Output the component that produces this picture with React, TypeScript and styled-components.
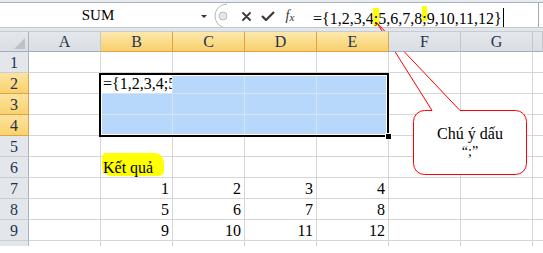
import React from 'react';
import styled, { createGlobalStyle, css } from 'styled-components';

const GlobalStyle = createGlobalStyle`
  html, body {
    margin: 0;
    padding: 0;
    background: #fff;
  }
  body {
    font-family: "Liberation Serif", "Times New Roman", serif;
  }
`;

const Page = styled.div`
  position: relative;
  width: 543px;
  height: 253px;
  overflow: hidden;
  background: #fff;
  font-family: "Liberation Serif", "Times New Roman", serif;
  color: #000;
`;

/* ---------- formula bar ---------- */

const TopStrip = styled.div`
  height: 2px;
  background: #e8ebef;
  border-bottom: 1px solid #a9b0b9;
`;

const FormulaBar = styled.div`
  display: flex;
  height: 24px;
  background: #fff;
  border-bottom: 1px solid #c3c8cf;
`;

const NameBox = styled.div`
  display: flex;
  width: 212px;
  align-items: center;
  font-size: 15px;
  line-height: 24px;
`;

const NameText = styled.span`
  flex: 1;
  text-align: center;
`;

const DropArrow = styled.span`
  width: 16px;
  display: flex;
  justify-content: center;
  padding-top: 2px;

  &::before {
    content: '';
    border-left: 3px solid transparent;
    border-right: 3px solid transparent;
    border-top: 3px solid #333;
  }
`;

const Grip = styled.svg`
  width: 23px;
  height: 24px;
  flex: none;
`;

const IconButton = styled.div`
  width: 22px;
  display: flex;
  align-items: center;
  justify-content: center;
  padding-top: 2px;
  color: #3a3a3a;
`;

const Fx = styled.span`
  font-style: italic;
  font-size: 14px;
  color: #333;
  line-height: 1;

  sub {
    font-size: 11px;
    vertical-align: -1px;
  }
`;

const FormulaText = styled.div`
  flex: 1;
  display: flex;
  align-items: flex-end;
  padding-left: 12px;
  font-size: 16px;
  line-height: 16px;
  white-space: nowrap;
`;

const Mark = styled.span<{ $top: number; $h: number }>`
  position: relative;
  z-index: 0;

  &::before {
    content: '';
    position: absolute;
    left: -0.5px;
    right: -0.5px;
    top: ${(p) => p.$top}px;
    height: ${(p) => p.$h}px;
    background: #ffff00;
    z-index: -1;
  }
`;

const Caret = styled.span`
  display: inline-block;
  width: 1px;
  height: 19px;
  margin-left: 1px;
  background: #000;
  vertical-align: -1px;
`;

const ExpandEdge = styled.div`
  width: 4px;
  border-left: 1px solid #a3abb4;
`;

const GapStrip = styled.div`
  height: 3px;
  background: #e3e7eb;
`;

/* ---------- sheet ---------- */

const Sheet = styled.div`
  display: grid;
  grid-template-columns: 29px repeat(7, 72px) 1fr;
  grid-template-rows: repeat(10, 21px) 5px;
`;

const headText = css`
  display: flex;
  align-items: flex-end;
  justify-content: center;
  font-size: 16px;
  line-height: 18px;
  color: #1f3350;
  position: relative;
  z-index: 2;
`;

const Corner = styled.div`
  ${headText};
  grid-row: 1;
  grid-column: 1;
  background: linear-gradient(#e4e7eb, #dadee3);
  border-top: 1px solid #c6ccd3;
  border-right: 1px solid #a9b3be;
  border-bottom: 1px solid #9fadbc;

  &::after {
    content: '';
    position: absolute;
    right: 3px;
    bottom: 2px;
    width: 11px;
    height: 11px;
    background: #bdc2c8;
    clip-path: polygon(100% 0, 100% 100%, 0 100%);
  }
`;

const ColHead = styled.div<{ $c: number; $sel?: boolean }>`
  ${headText};
  grid-row: 1;
  grid-column: ${(p) => p.$c};
  border-top: 1px solid #c6ccd3;
  border-right: 1px solid ${(p) => (p.$sel ? '#e0a14a' : '#c1c7cf')};
  border-bottom: 1px solid ${(p) => (p.$sel ? '#e0a14a' : '#9fadbc')};
  background: ${(p) =>
    p.$sel ? 'linear-gradient(#fde8ad, #f8d06b)' : 'linear-gradient(#e4e7eb, #dadee3)'};
`;

const RowHead = styled.div<{ $r: number; $sel?: boolean; $stub?: boolean }>`
  ${headText};
  grid-row: ${(p) => p.$r};
  grid-column: 1;
  border-right: 1px solid ${(p) => (p.$sel ? '#e0a14a' : '#a9b3be')};
  border-bottom: ${(p) => (p.$stub ? 'none' : `1px solid ${p.$sel ? '#e0a14a' : '#c9ced5'}`)};
  background: ${(p) => (p.$sel ? 'linear-gradient(#fde3a0, #f9d26d)' : '#e3e7ec')};
`;

const Cell = styled.div<{
  $r: number;
  $c: number;
  $sel?: boolean;
  $active?: boolean;
  $right?: boolean;
  $clip?: boolean;
  $mark?: boolean;
  $stub?: boolean;
  $edge?: boolean;
}>`
  grid-row: ${(p) => p.$r};
  grid-column: ${(p) => p.$c};
  display: flex;
  align-items: flex-end;
  justify-content: ${(p) => (p.$right ? 'flex-end' : 'flex-start')};
  padding: 0 3px 0 2px;
  min-width: 0;
  font-size: 16px;
  line-height: 18px;
  white-space: nowrap;
  overflow: ${(p) => (p.$clip ? 'hidden' : 'visible')};
  border-right: ${(p) => (p.$edge ? 'none' : `1px solid ${p.$sel ? '#d6e3f2' : '#d6d6d6'}`)};
  border-bottom: ${(p) => (p.$stub ? 'none' : `1px solid ${p.$sel ? '#d6e3f2' : '#d6d6d6'}`)};
  background: ${(p) => (p.$active ? '#fff' : p.$sel ? '#b8d8fb' : 'transparent')};
  position: ${(p) => (p.$mark ? 'relative' : 'static')};

  ${(p) =>
    p.$mark &&
    css`
      &::before {
        content: '';
        position: absolute;
        left: 1px;
        top: -4px;
        width: 62px;
        bottom: 1px;
        background: #ffff00;
        border-radius: 3px 9px 5px 10px / 6px 10px 5px 8px;
      }
    `}
`;

const CellText = styled.span`
  position: relative;
`;

const SelectionFrame = styled.div`
  grid-row: 3 / 6;
  grid-column: 3 / 7;
  margin: 0 0 -1px -2px;
  border: 2px solid #000;
  box-shadow: inset 0 0 0 1px #fff;
  position: relative;
  z-index: 1;
  pointer-events: none;

  &::after {
    content: '';
    position: absolute;
    right: -4px;
    bottom: -4px;
    width: 5px;
    height: 5px;
    background: #000;
    box-shadow: 0 0 0 1px #fff;
  }
`;

/* ---------- callout ---------- */

const CalloutLayer = styled.div`
  position: absolute;
  left: 0;
  top: 0;
  width: 543px;
  height: 253px;
  z-index: 1;
  pointer-events: none;
`;

const CalloutText = styled.div`
  position: absolute;
  left: 413px;
  top: 111px;
  width: 114px;
  padding-top: 14px;
  text-align: center;
  font-size: 16px;
  line-height: 18px;
`;

const CalloutSmall = styled.div`
  font-size: 14px;
  line-height: 17px;
`;

const COLS = ['A', 'B', 'C', 'D', 'E', 'F', 'G'];
const ROWS = [1, 2, 3, 4, 5, 6, 7, 8, 9];

type CellData = { text: string; right?: boolean; clip?: boolean; mark?: boolean };

const cells: Record<string, CellData> = {
  B2: { text: '={1,2,3,4;5,6,7,8;9,10,11,12}', clip: true },
  B6: { text: 'Kết quả', mark: true },
};
[
  [1, 2, 3, 4],
  [5, 6, 7, 8],
  [9, 10, 11, 12],
].forEach((row, i) =>
  row.forEach((n, j) => {
    cells[`${COLS[j + 1]}${7 + i}`] = { text: String(n), right: true };
  })
);

const inSelection = (c: number, r: number) => c >= 2 && c <= 5 && r >= 2 && r <= 4;

export default function App() {
  return (
    <Page>
      <GlobalStyle />
      <TopStrip />
      <FormulaBar>
        <NameBox>
          <NameText>SUM</NameText>
          <DropArrow />
        </NameBox>
        <Grip viewBox="0 0 23 24">
          <path d="M15 1 A12 12 0 0 0 15 25" fill="none" stroke="#b4bac2" strokeWidth="1" />
          <circle cx="11" cy="13" r="4" fill="#e3e6ea" stroke="#b9bec5" strokeWidth="1" />
        </Grip>
        <IconButton>
          <svg width="9" height="9" viewBox="0 0 9 9">
            <path d="M1 1 L8 8 M8 1 L1 8" stroke="currentColor" strokeWidth="1.8" strokeLinecap="round" />
          </svg>
        </IconButton>
        <IconButton>
          <svg width="14" height="10" viewBox="0 0 14 10">
            <path d="M1 5 L5 9 L13 1" fill="none" stroke="currentColor" strokeWidth="2.2" />
          </svg>
        </IconButton>
        <IconButton>
          <Fx>
            f<sub>x</sub>
          </Fx>
        </IconButton>
        <FormulaText>
          ={'{'}1,2,3,4
          <Mark $top={-3} $h={18}>;</Mark>
          5,6,7,8
          <Mark $top={-5} $h={15}>;</Mark>
          9,10,11,12{'}'}
          <Caret />
        </FormulaText>
        <ExpandEdge />
      </FormulaBar>
      <GapStrip />
      <Sheet>
        <Corner />
        {COLS.map((L, i) => (
          <ColHead key={L} $c={i + 2} $sel={i >= 1 && i <= 4}>
            {L}
          </ColHead>
        ))}
        <ColHead $c={9} />
        {ROWS.map((r) => (
          <React.Fragment key={r}>
            <RowHead $r={r + 1} $sel={r >= 2 && r <= 4}>
              {r}
            </RowHead>
            {[...COLS, 'H'].map((L, i) => {
              const c = i + 1;
              const d = cells[`${L}${r}`];
              return (
                <Cell
                  key={L}
                  $r={r + 1}
                  $c={c + 1}
                  $sel={inSelection(c, r)}
                  $active={L === 'B' && r === 2}
                  $right={d?.right}
                  $clip={d?.clip}
                  $mark={d?.mark}
                  $edge={L === 'H'}
                >
                  {d && <CellText>{d.text}</CellText>}
                </Cell>
              );
            })}
          </React.Fragment>
        ))}
        <RowHead $r={11} $stub />
        {[...COLS, 'H'].map((L, i) => (
          <Cell key={L} $r={11} $c={i + 2} $stub $edge={L === 'H'} />
        ))}
        <SelectionFrame />
      </Sheet>
      <CalloutLayer>
        <svg width="543" height="253" viewBox="0 0 543 253">
          <rect x="413.5" y="110.5" width="113" height="64" rx="11" fill="#fff" />
          <path
            d="M432 110.5 L377 23 L460 110.5 L515.5 110.5 A11 11 0 0 1 526.5 121.5 L526.5 163.5 A11 11 0 0 1 515.5 174.5 L424.5 174.5 A11 11 0 0 1 413.5 163.5 L413.5 121.5 A11 11 0 0 1 424.5 110.5 Z"
            fill="none"
            stroke="#ff0000"
            strokeWidth="1"
          />
        </svg>
        <CalloutText>
          Chú ý dấu
          <CalloutSmall>“;”</CalloutSmall>
        </CalloutText>
      </CalloutLayer>
    </Page>
  );
}
